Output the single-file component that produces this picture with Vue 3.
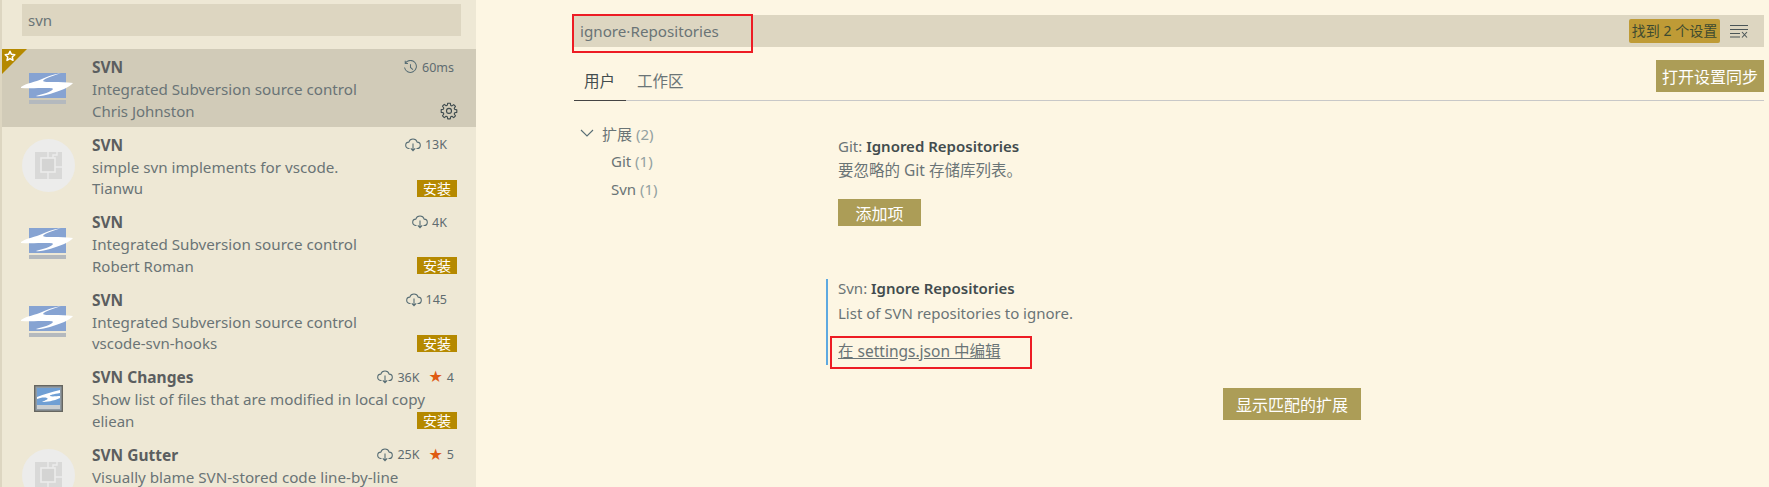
<template>
  <div class="page">
    <aside class="sidebar">
      <div class="search-wrap">
        <div class="search-box">svn</div>
      </div>
      <div class="ext-list">
        <div
          v-for="(ext, i) in extensions"
          :key="i"
          class="ext-row"
          :class="{ 'ext-row--selected': ext.selected }"
        >
          <div v-if="ext.selected" class="corner">
            <svg viewBox="0 0 16 16" width="12" height="12"><path d="M8 1.6l1.9 4.2 4.5.5-3.4 3 1 4.5L8 11.5l-4 2.3 1-4.5-3.4-3 4.5-.5z" fill="none" stroke="#fff" stroke-width="2" stroke-linejoin="round" /></svg>
          </div>
          <div class="ext-icon">
            <svg v-if="ext.icon === 'svn'" class="logo" viewBox="0 0 62 42" width="62" height="42">
              <rect x="11" y="6" width="37" height="25" fill="#86a3d2" />
              <rect x="11" y="33" width="37" height="4" fill="#b4b9be" />
              <path d="M3 20 C8 16 18 15 24 12 C30 9 38 7 43 6 C36 9 26 11 25 14 C26 16 42 14 55 16 C52 20 42 24 32 27 C27 28 21 30 18 29 C24 27 34 25 35 22 C35 20 14 22 3 21 Z" fill="#fff" />
            </svg>
            <svg v-else-if="ext.icon === 'small'" class="logo" viewBox="0 0 29 27" width="29" height="27">
              <rect x="0.7" y="0.7" width="27.6" height="25.6" fill="#8f9aa3" stroke="#666660" stroke-width="1.4" />
              <rect x="3" y="3" width="23" height="17" fill="#6f9fd4" />
              <rect x="3" y="20" width="23" height="4" fill="#c9ced1" />
              <path d="M3 12 C10 9 18 7 26 5 L26 8 C20 9 15 10 16 11 C18 12 23 11 26 11 L26 13 C20 16 12 17 8 17 C12 15 15 14 13 13 C10 12 6 13 3 14 Z" fill="#fff" />
            </svg>
            <div v-else class="placeholder">
              <svg viewBox="0 0 27 27" width="27" height="27">
                <rect width="27" height="27" fill="#d9d9d8" />
                <rect x="6" y="6" width="14" height="14" fill="#d4d4d3" stroke="#ececeb" stroke-width="1.6" />
                <path d="M13 0v6M13 20v7M20 15h7M18 6V3h4v-3" fill="none" stroke="#ececeb" stroke-width="1.4" />
              </svg>
            </div>
          </div>
          <div class="ext-body">
            <div class="ext-head">
              <span class="ext-name">{{ ext.name }}</span>
              <span class="ext-stats" :style="{ marginRight: ext.statRight + 'px' }">
                <svg v-if="ext.selected" viewBox="0 0 16 16" width="15" height="15">
                  <path d="M2.6 3.2A6.4 6.4 0 1 1 1.6 8M2.4 .9v2.9h2.9M8 4.4V8l2.6 2.2" fill="none" stroke="#586e75" stroke-width="1.1" />
                </svg>
                <svg v-else viewBox="0 0 16 14" width="16" height="14">
                  <path d="M4.5 10.5H4A3.2 3.2 0 0 1 3.8 4.1 4.4 4.4 0 0 1 12.2 4.1 3.2 3.2 0 0 1 12 10.5h-.5M8 5.5v7M5.8 10.4 8 12.7l2.2-2.3" fill="none" stroke="#586e75" stroke-width="1.1" />
                </svg>
                <span>{{ ext.stat }}</span>
                <template v-if="ext.stars">
                  <span class="star">★</span>
                  <span>{{ ext.stars }}</span>
                </template>
              </span>
            </div>
            <div class="ext-desc">{{ ext.desc }}</div>
            <div v-if="ext.author" class="ext-foot">
              <span class="ext-author">{{ ext.author }}</span>
              <svg v-if="ext.selected" class="gear" viewBox="0 0 18 18" width="18" height="18">
                <path d="M7.7 1.2h2.6l.4 2.2 1.2.5 1.8-1.3 1.8 1.8-1.3 1.8.5 1.2 2.1.4v2.6l-2.1.4-.5 1.2 1.3 1.8-1.8 1.8-1.8-1.3-1.2.5-.4 2.1H7.7l-.4-2.1-1.2-.5-1.8 1.3-1.8-1.8 1.3-1.8-.5-1.2-2.1-.4V7.6l2.1-.4.5-1.2-1.3-1.8 1.8-1.8 1.8 1.3 1.2-.5z" fill="none" stroke="#3d4a4d" stroke-width="1.1" stroke-linejoin="round" />
                <circle cx="9" cy="8.9" r="2.5" fill="none" stroke="#3d4a4d" stroke-width="1.1" />
              </svg>
              <span v-else-if="ext.install" class="install">安装</span>
            </div>
          </div>
        </div>
      </div>
    </aside>

    <main class="main">
      <div class="settings-search">
        <span class="query">ignore·Repositories</span>
        <span class="count">找到 2 个设置</span>
        <svg class="clear" viewBox="0 0 18 14" width="18" height="14">
          <path d="M0 1.5h18M0 5.5h18M0 9.5h10M0 13h10" fill="none" stroke="#4a5557" stroke-width="1" />
          <path d="M12 8l5 5.5M17 8l-5 5.5" fill="none" stroke="#4a5557" stroke-width="1.1" />
        </svg>
        <div class="red-box red-box--search"></div>
      </div>

      <div class="tabs">
        <div class="tab-list">
          <span class="tab tab--active">用户</span>
          <span class="tab">工作区</span>
        </div>
        <button class="btn btn--sync">打开设置同步</button>
      </div>

      <div class="content">
        <nav class="tree">
          <div class="tree-root">
            <svg viewBox="0 0 14 8" width="14" height="8"><path d="M1 1l6 6 6-6" fill="none" stroke="#586e75" stroke-width="1.1" /></svg>
            <span>扩展 <em>(2)</em></span>
          </div>
          <div class="tree-leaf">Git <em>(1)</em></div>
          <div class="tree-leaf">Svn <em>(1)</em></div>
        </nav>

        <section class="settings">
          <div class="setting setting--git">
            <div class="setting-title"><span>Git: </span><b>Ignored Repositories</b></div>
            <div class="setting-desc setting-desc--cjk">要忽略的 Git 存储库列表。</div>
            <button class="btn btn--add">添加项</button>
          </div>
          <div class="setting setting--svn">
            <div class="setting-title"><span>Svn: </span><b>Ignore Repositories</b></div>
            <div class="setting-desc">List of SVN repositories to ignore.</div>
            <a class="setting-link">在 settings.json 中编辑</a>
            <div class="red-box red-box--link"></div>
          </div>
          <button class="btn btn--show">显示匹配的扩展</button>
        </section>
      </div>
    </main>
  </div>
</template>

<script setup>
const desc = 'Integrated Subversion source control'

const extensions = [
  { name: 'SVN', desc, author: 'Chris Johnston', stat: '60ms', icon: 'svn', selected: true, statRight: 3 },
  { name: 'SVN', desc: 'simple svn implements for vscode.', author: 'Tianwu', stat: '13K', icon: 'none', install: true, statRight: 10 },
  { name: 'SVN', desc, author: 'Robert Roman', stat: '4K', icon: 'svn', install: true, statRight: 10 },
  { name: 'SVN', desc, author: 'vscode-svn-hooks', stat: '145', icon: 'svn', install: true, statRight: 10 },
  { name: 'SVN Changes', desc: 'Show list of files that are modified in local copy', author: 'eliean', stat: '36K', stars: 4, icon: 'small', install: true, statRight: 3 },
  { name: 'SVN Gutter', desc: 'Visually blame SVN-stored code line-by-line', stat: '25K', stars: 5, icon: 'none', statRight: 3 },
]
</script>

<style>
html,
body {
  margin: 0;
  height: 100%;
  overflow: hidden;
  background: #fdf6e3;
}
</style>

<style scoped>
.page {
  display: flex;
  height: 487px;
  overflow: hidden;
  font-family: "Noto Sans", "Noto Sans CJK SC", sans-serif;
  font-size: 15px;
  color: #6a7476;
  background: #fdf6e3;
}

.sidebar {
  flex: 0 0 474px;
  border-left: 2px solid #ddd6c1;
  background: #eee8d5;
  overflow: hidden;
}

.search-wrap {
  height: 49px;
  padding: 4px 15px 0 20px;
  box-sizing: border-box;
}

.search-box {
  height: 32px;
  line-height: 32px;
  padding-left: 6px;
  background: #ddd6c1;
}

.ext-row {
  position: relative;
  display: flex;
  height: 77.6px;
  box-sizing: border-box;
  padding-left: 20px;
}

.ext-row--selected {
  background: #d1cbb8;
}

.corner {
  position: absolute;
  left: 0;
  top: 0;
  width: 25px;
  height: 25px;
  background: #b58900;
  clip-path: polygon(0 0, 100% 0, 0 100%);
}

.corner svg {
  position: absolute;
  left: 2px;
  top: 1px;
}

.ext-icon {
  flex: 0 0 53px;
  min-width: 0;
  display: flex;
  align-items: center;
  justify-content: center;
  margin-right: 17px;
}

.logo {
  flex: none;
}

.placeholder {
  display: flex;
  flex: none;
  align-items: center;
  justify-content: center;
  width: 53px;
  height: 53px;
  border-radius: 50%;
  background: #ececeb;
}

.ext-body {
  flex: 1;
  min-width: 0;
  padding: 7px 19px 0 0;
}

.ext-head,
.ext-foot {
  display: flex;
  align-items: center;
  justify-content: space-between;
}

.ext-head {
  height: 22px;
}

.ext-name {
  font-size: 15.5px;
  font-weight: 700;
  color: #5b5e60;
}

.ext-stats {
  display: flex;
  align-items: center;
  gap: 4px;
  font-size: 12.5px;
  color: #5f6c70;
}

.star {
  color: #df5b12;
  font-size: 16px;
  margin-left: 5px;
  line-height: 1;
  font-family: "DejaVu Sans", sans-serif;
}

.ext-desc {
  height: 23.5px;
  line-height: 23px;
  font-size: 15.2px;
  white-space: nowrap;
}

.ext-foot {
  height: 18px;
}

.install {
  width: 40px;
  height: 17px;
  line-height: 17px;
  text-align: center;
  font-size: 14px;
  color: #fff;
  background: #b58900;
}

.gear {
  margin-right: -1px;
}

.main {
  flex: 1;
  min-width: 0;
  padding: 15px 5px 0 96px;
}

.settings-search {
  position: relative;
  display: flex;
  align-items: center;
  height: 32px;
  padding: 0 16px 0 8px;
  background: #ddd6c1;
}

.query {
  flex: 1;
  font-size: 15.2px;
}

.count {
  width: 91px;
  height: 24px;
  line-height: 24px;
  text-align: center;
  border-radius: 2px;
  font-size: 14px;
  color: #3d4a30;
  background: #bf9b36;
  margin-right: 10px;
}

.red-box {
  position: absolute;
  box-sizing: border-box;
  border: 2px solid #ed1c24;
}

.red-box--search {
  left: 0;
  top: -1px;
  width: 181px;
  height: 39px;
}

.red-box--link {
  left: 2px;
  top: 57px;
  width: 202px;
  height: 33px;
}

.tabs {
  display: flex;
  justify-content: space-between;
  align-items: flex-start;
  height: 54px;
  margin-left: 2px;
  padding-top: 13px;
  box-sizing: border-box;
  border-bottom: 1px solid #c8c8c8;
}

.tab-list {
  display: flex;
  height: 41px;
}

.tab {
  height: 40px;
  padding: 0 10px 0 11px;
  line-height: 42px;
  font-size: 15.5px;
  box-sizing: border-box;
}

.tab--active {
  color: #424c4e;
  border-bottom: 1px solid #444;
  height: 41px;
  padding: 0 11px 0 10px;
}

.btn {
  display: block;
  padding: 0;
  border: 0;
  font: inherit;
  font-size: 16px;
  color: #fff;
  background: #ac9d57;
}

.btn--sync {
  width: 108px;
  height: 32px;
}

.content {
  display: flex;
  margin-left: 2px;
}

.tree {
  flex: 0 0 252px;
  padding: 21px 0 0 6px;
  box-sizing: border-box;
}

.tree em {
  font-style: normal;
  color: #93a1a1;
}

.tree-root {
  display: flex;
  align-items: center;
  gap: 8px;
  height: 22px;
}

.tree-leaf {
  height: 28px;
  line-height: 34px;
  padding-left: 31px;
}

.settings {
  display: flex;
  flex-direction: column;
  width: 535px;
  padding-top: 36px;
}

.setting {
  position: relative;
  padding-left: 10px;
  border-left: 2px solid transparent;
}

.setting--git {
  height: 142px;
}

.setting--svn {
  height: 86px;
  border-left-color: #5ea9e0;
}

.setting-title {
  height: 18px;
  line-height: 18px;
  white-space: nowrap;
}

.setting-title b {
  font-weight: 600;
  color: #424c4e;
}

.setting-desc {
  height: 26px;
  margin-top: 3px;
  line-height: 26px;
  white-space: nowrap;
}

.setting-desc--cjk {
  margin-top: 2px;
  margin-bottom: 1px;
  font-size: 15.5px;
}

.setting-link {
  display: block;
  margin-top: 14px;
  line-height: 22px;
  font-size: 15.5px;
  text-decoration: underline;
}

.btn--add {
  width: 83px;
  height: 27px;
  margin-top: 16px;
}

.btn--show {
  align-self: flex-end;
  width: 138px;
  height: 32px;
  margin-top: 23px;
}
</style>
